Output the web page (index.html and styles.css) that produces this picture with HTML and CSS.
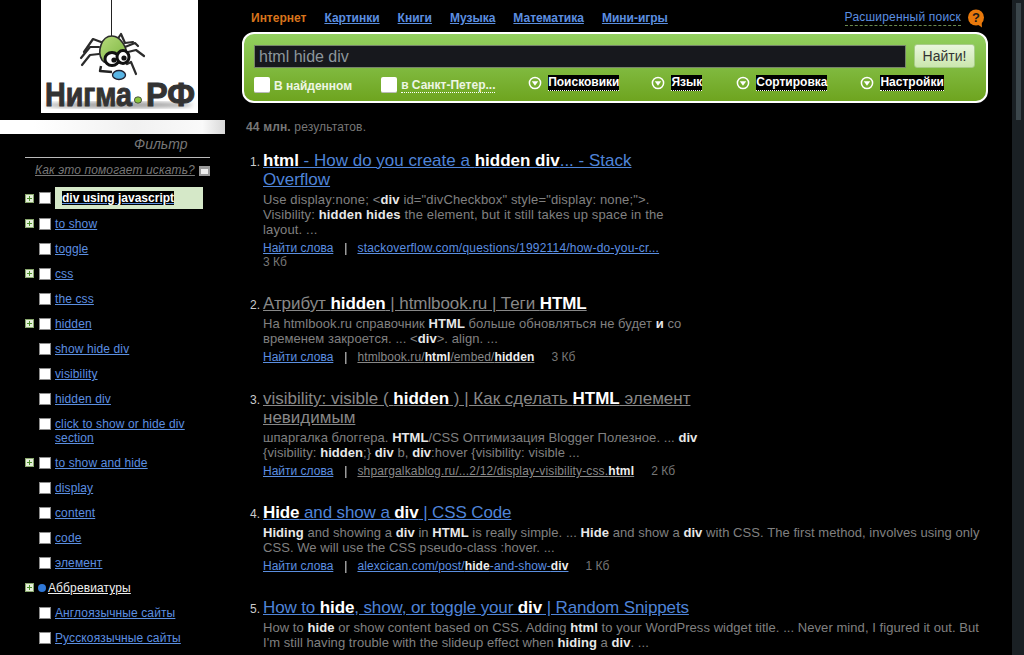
FILE: index.html
```html
<!DOCTYPE html>
<html lang="ru">
<head>
    <meta charset="UTF-8">
    <title>html hide div - Нигма.РФ</title>
    <link rel="stylesheet" href="styles.css">
</head>
<body>
    <div class="page">
        <aside class="sidebar">
            <a class="logo" href="#">
                <svg width="157" height="113" viewBox="0 0 157 113">
                    <defs>
                        <linearGradient id="bodyGrad" x1="0" y1="0" x2="1" y2="1">
                            <stop offset="0" stop-color="#b7dc7c"/>
                            <stop offset="1" stop-color="#78b23c"/>
                        </linearGradient>
                        <filter id="soft"><feGaussianBlur stdDeviation="2"/></filter>
                    </defs>
                    <line x1="70.5" y1="0" x2="70.5" y2="36" stroke="#222" stroke-width="1"/>
                    <g fill="none" stroke="#2b2b2b" stroke-width="2.2" stroke-linecap="round" stroke-linejoin="round">
                        <path d="M60 42 L52 39 L43 52"/>
                        <path d="M58 47 L49 47 L40 58"/>
                        <path d="M58 54 L49 55 L41 65"/>
                        <path d="M78 37 L80 34 L84 43 L92 42"/>
                        <path d="M84 47 L94 43 L97 46"/>
                        <path d="M87 52 L95 50 L103 56"/>
                        <path d="M86 64 L90 62 L95 74"/>
                    </g>
                    <path d="M71 36 C80 36 86 48 86 56 C82 66 66 66 61 60 C56 52 60 36 71 36 Z" fill="url(#bodyGrad)" stroke="#2b2b2b" stroke-width="1.6"/>
                    <ellipse cx="71" cy="59" rx="7" ry="6.5" fill="#fff" stroke="#111" stroke-width="3"/>
                    <ellipse cx="82" cy="57" rx="6" ry="6.5" fill="#fff" stroke="#111" stroke-width="3"/>
                    <circle cx="73" cy="60" r="2.6" fill="#111"/>
                    <circle cx="83" cy="58" r="2.6" fill="#111"/>
                    <path d="M60 66 L59 71 L71 72" fill="none" stroke="#222" stroke-width="2.4" stroke-linejoin="round"/>
                    <ellipse cx="78" cy="75" rx="6.5" ry="4.5" fill="#58b4e4" stroke="#223" stroke-width="1.4"/>
                    <ellipse cx="78" cy="105" rx="74" ry="3" fill="#999" filter="url(#soft)"/>
                    <text class="logo-word" x="4" y="106" textLength="87" lengthAdjust="spacingAndGlyphs">Нигма</text>
                    <ellipse cx="97" cy="100" rx="3.6" ry="3.2" fill="#8cc63f" stroke="#333" stroke-width="0.8"/>
                    <text class="logo-word" x="105" y="106" textLength="49" lengthAdjust="spacingAndGlyphs">РФ</text>
                </svg>
            </a>
            <div class="filter-bar"></div>
            <div class="filter-title">Фильтр</div>
            <div class="filter-box">
                <div class="filter-help">
                    <a href="#">Как это помогает искать?</a>
                    <span class="help-icon"></span>
                </div>
                <ul class="cluster-list">
                    <li class="cluster-item cluster-active">
                        <span class="plus"></span><span class="check"></span>
                        <span class="cluster-label"><span class="cluster-mark">div using javascript</span></span>
                    </li>
                    <li class="cluster-item"><span class="plus"></span><span class="check"></span><a href="#">to show</a></li>
                    <li class="cluster-item"><span class="no-plus"></span><span class="check"></span><a href="#">toggle</a></li>
                    <li class="cluster-item"><span class="plus"></span><span class="check"></span><a href="#">css</a></li>
                    <li class="cluster-item"><span class="no-plus"></span><span class="check"></span><a href="#">the css</a></li>
                    <li class="cluster-item"><span class="plus"></span><span class="check"></span><a href="#">hidden</a></li>
                    <li class="cluster-item"><span class="no-plus"></span><span class="check"></span><a href="#">show hide div</a></li>
                    <li class="cluster-item"><span class="no-plus"></span><span class="check"></span><a href="#">visibility</a></li>
                    <li class="cluster-item"><span class="no-plus"></span><span class="check"></span><a href="#">hidden div</a></li>
                    <li class="cluster-item"><span class="no-plus"></span><span class="check"></span><a href="#">click to show or hide div section</a></li>
                    <li class="cluster-item"><span class="plus"></span><span class="check"></span><a href="#">to show and hide</a></li>
                    <li class="cluster-item"><span class="no-plus"></span><span class="check"></span><a href="#">display</a></li>
                    <li class="cluster-item"><span class="no-plus"></span><span class="check"></span><a href="#">content</a></li>
                    <li class="cluster-item"><span class="no-plus"></span><span class="check"></span><a href="#">code</a></li>
                    <li class="cluster-item"><span class="no-plus"></span><span class="check"></span><a href="#">элемент</a></li>
                    <li class="cluster-item cluster-group"><span class="plus"></span><span class="dot"></span><a href="#">Аббревиатуры</a></li>
                    <li class="cluster-item"><span class="no-plus"></span><span class="check"></span><a href="#">Англоязычные сайты</a></li>
                    <li class="cluster-item"><span class="no-plus"></span><span class="check"></span><a href="#">Русскоязычные сайты</a></li>
                </ul>
            </div>
        </aside>

        <main class="content">
            <nav class="top-nav">
                <span class="nav-current">Интернет</span>
                <a href="#">Картинки</a>
                <a href="#">Книги</a>
                <a href="#">Музыка</a>
                <a href="#">Математика</a>
                <a href="#">Мини-игры</a>
                <a class="nav-advanced" href="#">Расширенный поиск</a>
                <svg class="nav-help" width="18" height="19" viewBox="0 0 18 19">
                    <circle cx="9" cy="8.5" r="8" fill="#e8790c"/>
                    <path d="M10 15 L15 18.5 L14.5 12 Z" fill="#e8790c"/>
                    <text x="9" y="13" text-anchor="middle" class="nav-help-mark">?</text>
                </svg>
            </nav>

            <form class="search-panel">
                <div class="search-row">
                    <input class="search-input" type="text" value="html hide div">
                    <button class="search-button" type="button">Найти!</button>
                </div>
                <div class="options-row">
                    <span class="option-check"></span>
                    <span class="option-text option-first">В найденном</span>
                    <span class="option-check"></span>
                    <a class="option-text option-city" href="#">в Санкт-Петер...</a>
                    <span class="drop drop-engines"><svg class="drop-icon" width="14" height="14" viewBox="0 0 14 14"><circle cx="7" cy="7" r="5.6" fill="none" stroke="#fff" stroke-width="1.5"/><path d="M3.8 5.2 H10.2 L7 9.8 Z" fill="#fff"/></svg><span class="drop-label">Поисковики</span></span>
                    <span class="drop drop-lang"><svg class="drop-icon" width="14" height="14" viewBox="0 0 14 14"><circle cx="7" cy="7" r="5.6" fill="none" stroke="#fff" stroke-width="1.5"/><path d="M3.8 5.2 H10.2 L7 9.8 Z" fill="#fff"/></svg><span class="drop-label">Язык</span></span>
                    <span class="drop drop-sort"><svg class="drop-icon" width="14" height="14" viewBox="0 0 14 14"><circle cx="7" cy="7" r="5.6" fill="none" stroke="#fff" stroke-width="1.5"/><path d="M3.8 5.2 H10.2 L7 9.8 Z" fill="#fff"/></svg><span class="drop-label">Сортировка</span></span>
                    <span class="drop"><svg class="drop-icon" width="14" height="14" viewBox="0 0 14 14"><circle cx="7" cy="7" r="5.6" fill="none" stroke="#fff" stroke-width="1.5"/><path d="M3.8 5.2 H10.2 L7 9.8 Z" fill="#fff"/></svg><span class="drop-label">Настройки</span></span>
                </div>
            </form>

            <div class="result-count"><b>44 млн.</b> результатов.</div>

            <ol class="results">
                <li class="result result-narrow result-one">
                    <a class="result-title" href="#"><b>html</b> - How do you create a <b>hidden div</b>... - Stack Overflow</a>
                    <p class="snippet">Use display:none; &lt;<b>div</b> id="divCheckbox" style="display: none;"&gt;. Visibility: <b>hidden hides</b> the element, but it still takes up space in the layout. ...</p>
                    <div class="result-meta">
                        <a href="#">Найти слова</a><span class="meta-sep">|</span><a class="meta-url" href="#">stackoverflow.com/questions/1992114/how-do-you-cr...</a>
                        <div class="meta-size-line">3 Кб</div>
                    </div>
                </li>
                <li class="result result-narrow result-visited result-two">
                    <a class="result-title" href="#">Атрибут <b>hidden</b> | htmlbook.ru | Теги <b>HTML</b></a>
                    <p class="snippet">На htmlbook.ru справочник <b>HTML</b> больше обновляться не будет <b>и</b> со временем закроется. ... &lt;<b>div</b>&gt;. align. ...</p>
                    <div class="result-meta">
                        <a class="meta-find" href="#">Найти слова</a><span class="meta-sep">|</span><a class="meta-url" href="#">htmlbook.ru/<b>html</b>/embed/<b>hidden</b></a><span class="meta-size">3 Кб</span>
                    </div>
                </li>
                <li class="result result-narrow result-visited result-three">
                    <a class="result-title" href="#">visibility: visible ( <b>hidden</b> ) | Как сделать <b>HTML</b> элемент невидимым</a>
                    <p class="snippet">шпаргалка блоггера. <b>HTML</b>/CSS Оптимизация Blogger Полезное. ... <b>div</b> {visibility: <b>hidden</b>;} <b>div</b> b, <b>div</b>:hover {visibility: visible ...</p>
                    <div class="result-meta">
                        <a class="meta-find" href="#">Найти слова</a><span class="meta-sep">|</span><a class="meta-url" href="#">shpargalkablog.ru/...2/12/display-visibility-css.<b>html</b></a><span class="meta-size">2 Кб</span>
                    </div>
                </li>
                <li class="result result-four">
                    <a class="result-title" href="#"><b>Hide</b> and show a <b>div</b> | CSS Code</a>
                    <p class="snippet"><b>Hiding</b> and showing a <b>div</b> in <b>HTML</b> is really simple. ... <b>Hide</b> and show a <b>div</b> with CSS. The first method, involves using only CSS. We will use the CSS pseudo-class :hover. ...</p>
                    <div class="result-meta">
                        <a href="#">Найти слова</a><span class="meta-sep">|</span><a class="meta-url" href="#">alexcican.com/post/<b>hide</b>-and-show-<b>div</b></a><span class="meta-size">1 Кб</span>
                    </div>
                </li>
                <li class="result result-five">
                    <a class="result-title" href="#">How to <b>hide</b>, show, or toggle your <b>div</b> | Random Snippets</a>
                    <p class="snippet">How to <b>hide</b> or show content based on CSS. Adding <b>html</b> to your WordPress widget title. ... Never mind, I figured it out. But I'm still having trouble with the slideup effect when <b>hiding</b> a <b>div</b>. ...</p>
                    <div class="result-meta">
                        <a href="#">Найти слова</a>
                    </div>
                </li>
            </ol>
        </main>

        <div class="scrollbar"><div class="scrollbar-thumb"></div></div>
    </div>
</body>
</html>
```

FILE: styles.css
```css
html, body {
    margin: 0;
    height: 100%;
    overflow: hidden;
    background: #000;
    font-family: "Liberation Sans", Arial, sans-serif;
    font-size: 12px;
    color: #888;
}

a {
    color: #5c8fe0;
}

.page {
    display: flex;
    height: 655px;
    overflow: hidden;
    position: relative;
}

/* Левая колонка */
.sidebar {
    width: 225px;
    flex: none;
}

.logo {
    display: block;
    width: 157px;
    height: 113px;
    margin-left: 41px;
    background: #fff;
}

.logo svg {
    display: block;
}

.logo-word {
    font-family: "Liberation Sans", Arial, sans-serif;
    font-weight: bold;
    font-size: 33px;
    fill: #333;
    stroke: #333;
    stroke-width: 1;
}

.filter-bar {
    height: 14px;
    margin-top: 7px;
    background: linear-gradient(90deg, #fff 15%, #f1f1f1 60%, #fafafa 90%, #d8d8d8 100%);
}

.filter-title {
    margin-top: 2px;
    padding-left: 134px;
    font-style: italic;
    font-size: 14px;
    line-height: 16px;
    color: #777;
}

.filter-box {
    margin: 5px 15px 0 25px;
    border-top: 1px solid #bbb;
}

.filter-help {
    display: flex;
    align-items: center;
    margin-top: 5px;
    padding-left: 10px;
    gap: 4px;
    line-height: 14px;
    font-style: italic;
    letter-spacing: 0.12px;
}

.filter-help a {
    color: #777;
}

.help-icon {
    box-sizing: border-box;
    width: 11px;
    height: 10px;
    margin-top: 1px;
    border: 2px solid #999;
    border-top-width: 3px;
    background: #eee;
}

.cluster-list {
    list-style: none;
    margin: 10px 0 0;
    padding: 0;
}

.cluster-item {
    display: flex;
    align-items: flex-start;
    padding-bottom: 11px;
    line-height: 14px;
    letter-spacing: 0.12px;
}

.cluster-item a {
    width: 145px;
    color: #5c8fe0;
}

.cluster-active {
    padding-bottom: 8px;
    align-items: center;
}

.cluster-group a {
    color: #eee;
    width: auto;
}

.plus, .no-plus {
    box-sizing: border-box;
    flex: none;
    width: 9px;
    height: 9px;
    margin: 2px 5px 0 0;
}

.plus {
    border: 1px solid #8aa86e;
    background:
        linear-gradient(#4d8f2c, #4d8f2c) center / 5px 1px no-repeat,
        linear-gradient(#4d8f2c, #4d8f2c) center / 1px 5px no-repeat,
        #e6f0da;
}

.check {
    box-sizing: border-box;
    flex: none;
    width: 12px;
    height: 12px;
    margin: 1px 4px 0 0;
    border: 1px solid #8c8c8c;
    background: #fff;
}

.cluster-active .plus, .cluster-active .check {
    margin-top: 0;
}

.dot {
    flex: none;
    width: 8px;
    height: 8px;
    margin: 3px 2px 0 -1px;
    border-radius: 50%;
    background: #2f78d8;
}

.cluster-label {
    flex: 1;
    margin-right: 7px;
    padding: 4px 7px;
    background: #d5e8c8;
}

.cluster-mark {
    background: #000;
    color: #fff;
    font-weight: bold;
    letter-spacing: 0;
    text-decoration: underline;
    text-decoration-color: #5c8fe0;
}

/* Правая часть */
.content {
    flex: 1;
    min-width: 0;
    padding-left: 17px;
}

.top-nav {
    display: flex;
    align-items: center;
    gap: 18px;
    width: 743px;
    height: 18px;
    margin-top: 9px;
    padding-left: 9px;
    box-sizing: border-box;
    font-weight: bold;
    line-height: 18px;
}

.nav-current {
    color: #d8741c;
}

.nav-advanced {
    margin-left: auto;
    margin-right: -12px;
    font-weight: normal;
    color: #5c8fe0;
    text-decoration: none;
    border-bottom: 1px dashed #6a8a50;
    line-height: 15px;
    letter-spacing: 0.2px;
}

.nav-help {
    flex: none;
    margin-right: 0;
}

.nav-help-mark {
    font-family: "Liberation Sans", Arial, sans-serif;
    font-weight: bold;
    font-size: 13px;
    fill: #1a1a1a;
}

.search-panel {
    box-sizing: border-box;
    width: 746px;
    height: 71px;
    margin-top: 5px;
    padding: 11px 11px 0 10px;
    border: 2px solid #fff;
    border-radius: 12px;
    background: linear-gradient(#93d060, #6ea41f);
}

.search-row {
    display: flex;
    gap: 8px;
}

.search-input {
    box-sizing: border-box;
    flex: 1;
    height: 23px;
    margin: 0;
    padding: 0 4px;
    border: 1px solid #77846a;
    background: #17181d;
    font-family: "Liberation Sans", Arial, sans-serif;
    font-size: 16px;
    color: #8d969c;
}

.search-button {
    box-sizing: border-box;
    width: 61px;
    height: 24px;
    margin-top: -1px;
    padding: 0;
    border: 1px solid #a8cc88;
    border-radius: 3px;
    background: linear-gradient(#e9f6dc, #cbe7ae);
    font-family: "Liberation Sans", Arial, sans-serif;
    font-size: 14px;
    color: #333;
}

.options-row {
    display: flex;
    align-items: center;
    height: 20px;
    margin-top: 6px;
}

.option-check {
    box-sizing: border-box;
    flex: none;
    width: 16px;
    height: 16px;
    margin-top: 2px;
    border-radius: 2px;
    background: #fff;
    border-bottom: 1px solid #bbb;
}

.option-text {
    margin-top: 3px;
    margin-left: 4px;
    font-weight: bold;
    color: #eef6e4;
}

.option-first {
    margin-right: 29px;
}

.option-city {
    width: 94px;
    text-decoration: none;
    border-bottom: 1px dotted #fff;
    line-height: 14px;
    white-space: nowrap;
}

.drop {
    display: flex;
    align-items: center;
    margin-left: 33px;
    margin-top: -3px;
}

.drop-icon {
    flex: none;
    margin-right: 6px;
}

.drop-label {
    background: #000;
    color: #fff;
    font-weight: bold;
    line-height: 15px;
    border-bottom: 1px dotted #fff;
}

.drop-lang {
    margin-left: 32px;
}

.drop-sort {
    margin-left: 34px;
}

.result-count {
    margin: 17px 0 0 4px;
    font-size: 12px;
    line-height: 14px;
    color: #777;
    letter-spacing: 0.15px;
}

.results {
    list-style: none;
    margin: 17px 0 0;
    padding: 0;
    counter-reset: result;
}

.result {
    position: relative;
    width: 722px;
    margin-left: 21px;
    counter-increment: result;
}

/* Номер результата слева от заголовка */
.result::before {
    content: counter(result) ".";
    position: absolute;
    left: -13px;
    top: 4px;
    font-size: 12px;
    line-height: 14px;
    color: #ccc;
}

.result-narrow {
    width: 437px;
}

.result-two {
    margin-top: 25px;
}

.result-three, .result-four, .result-five {
    margin-top: 24px;
}

.result-title {
    font-size: 17px;
    line-height: 19px;
    color: #4f84d8;
}

.result-title b {
    color: #fff;
}

.result-visited .result-title {
    color: #888;
}

.result-two .result-title {
    letter-spacing: -0.08px;
}

.result-four .result-title, .result-five .result-title {
    letter-spacing: -0.12px;
}

.snippet {
    margin: 3px 0 0;
    font-size: 13px;
    line-height: 15px;
    letter-spacing: 0.06px;
    color: #808080;
}

.snippet b {
    color: #e8e8e8;
}

.result-one .snippet {
    width: 425px;
    letter-spacing: 0.15px;
}

.result-meta {
    margin-top: 3px;
    line-height: 16px;
    color: #777;
}

.result-meta a {
    color: #5c8fe0;
}

.result-meta b {
    color: #eee;
}

.result-visited .result-meta a {
    color: #888;
}

.result-visited .result-meta a.meta-find {
    color: #5c8fe0;
}

.meta-url {
    letter-spacing: 0.1px;
}

.result-one .meta-url {
    letter-spacing: 0.2px;
}

.result-three .meta-url {
    letter-spacing: 0.15px;
}

.meta-sep {
    margin: 0 10px 0 11px;
    color: #fff;
    opacity: 0.85;
}

.meta-size {
    margin-left: 17px;
}

.meta-size-line {
    line-height: 13px;
}

/* Полоса прокрутки */
.scrollbar {
    position: absolute;
    top: 0;
    right: 0;
    bottom: 0;
    width: 12px;
    background: #1a2024;
}

.scrollbar-thumb {
    position: absolute;
    top: 3px;
    left: 4px;
    width: 5px;
    height: 117px;
    background: #3b464b;
}
```
